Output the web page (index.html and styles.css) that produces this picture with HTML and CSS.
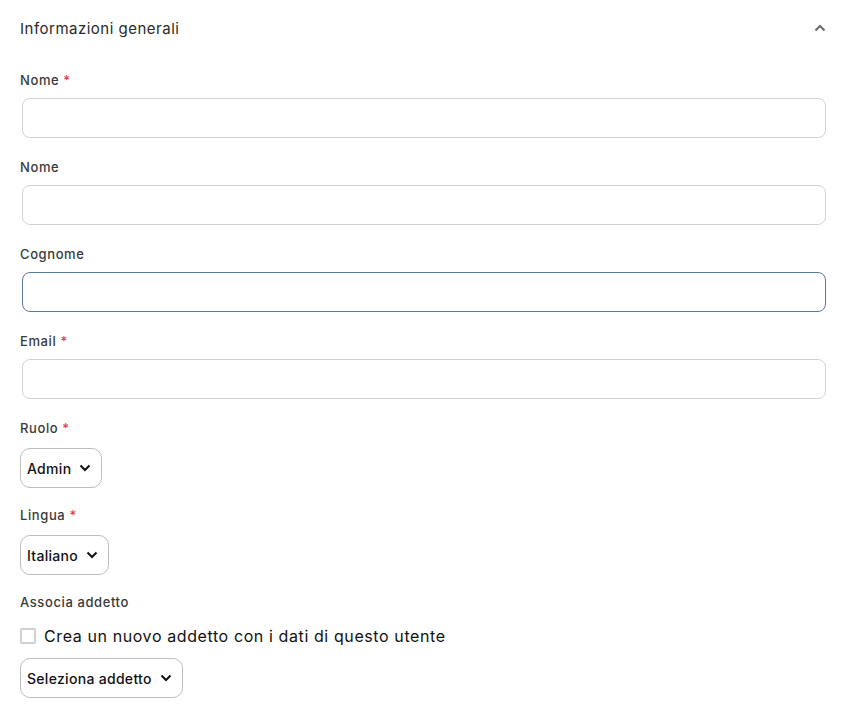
FILE: index.html
```html
<!DOCTYPE html>
<html lang="it">

<head>
    <meta charset="UTF-8">
    <meta name="viewport" content="width=device-width, initial-scale=1.0">
    <title>Informazioni generali</title>
    <link rel="stylesheet" href="styles.css">
</head>

<body>
    <div class="section">
        <div class="section-header">
            <span class="section-title">Informazioni generali</span>
            <svg class="collapse-icon" width="12" height="8" viewBox="0 0 12 8">
                <path d="M1.5 6.5 L6 2 L10.5 6.5" fill="none" stroke="#6b6b6b" stroke-width="2" />
            </svg>
        </div>

        <div class="field">
            <label class="field-label">Nome <span class="required">*</span></label>
            <input type="text" class="text-input">
        </div>

        <div class="field">
            <label class="field-label">Nome</label>
            <input type="text" class="text-input">
        </div>

        <div class="field">
            <label class="field-label">Cognome</label>
            <input type="text" class="text-input focused">
        </div>

        <div class="field">
            <label class="field-label">Email <span class="required">*</span></label>
            <input type="text" class="text-input">
        </div>

        <div class="field">
            <label class="field-label">Ruolo <span class="required">*</span></label>
            <div class="select">
                <span>Admin</span>
                <svg width="12" height="8" viewBox="0 0 12 8">
                    <path d="M1.5 1.5 L6 6 L10.5 1.5" fill="none" stroke="#111" stroke-width="2" />
                </svg>
            </div>
        </div>

        <div class="field">
            <label class="field-label">Lingua <span class="required">*</span></label>
            <div class="select">
                <span>Italiano</span>
                <svg width="12" height="8" viewBox="0 0 12 8">
                    <path d="M1.5 1.5 L6 6 L10.5 1.5" fill="none" stroke="#111" stroke-width="2" />
                </svg>
            </div>
        </div>

        <div class="field">
            <label class="field-label">Associa addetto</label>
            <label class="checkbox-row">
                <span class="checkbox"></span>
                <span>Crea un nuovo addetto con i dati di questo utente</span>
            </label>
            <div class="select last">
                <span>Seleziona addetto</span>
                <svg width="12" height="8" viewBox="0 0 12 8">
                    <path d="M1.5 1.5 L6 6 L10.5 1.5" fill="none" stroke="#111" stroke-width="2" />
                </svg>
            </div>
        </div>
    </div>
</body>

</html>
```

FILE: styles.css
```css
body {
    font-family: 'Inter', 'Noto Sans', sans-serif;
    background-color: #fff;
    margin: 0;
    color: #222;
}

.section {
    padding: 0 14px 20px 20px;
}

.section-header {
    display: flex;
    justify-content: space-between;
    align-items: center;
    height: 56px;
    margin-bottom: 14px;
}

.section-title {
    font-size: 15px;
    letter-spacing: 0.5px;
    color: #2a2a2a;
}

.collapse-icon {
    margin-right: 2px;
}

.field {
    display: flex;
    flex-direction: column;
    align-items: flex-start;
    margin-bottom: 19px;
}

.field-label {
    font-size: 13px;
    font-weight: 500;
    line-height: 20px;
    letter-spacing: 0.6px;
    color: #3a3a3a;
    margin-bottom: 8px;
}

.required {
    color: #e0394b;
}

.text-input {
    box-sizing: border-box;
    width: calc(100% - 4px);
    height: 40px;
    margin: 0 2px;
    border: 1px solid #d2d2d2;
    border-radius: 8px;
    outline: none;
    font-family: inherit;
}

.text-input.focused {
    border-color: #5b7896;
}

.select {
    box-sizing: border-box;
    height: 40px;
    display: flex;
    align-items: center;
    gap: 8px;
    margin: 2px 0 -2px;
    padding: 0 10px 0 6px;
    border: 1px solid #bdbdbd;
    border-radius: 10px;
    font-size: 14px;
    font-weight: 500;
    letter-spacing: 0.3px;
    color: #111;
}

.select.last {
    margin: 0;
}

.checkbox-row {
    display: flex;
    align-items: center;
    gap: 8px;
    font-size: 16px;
    letter-spacing: 0.6px;
    color: #111;
    margin: 6px 0 12px;
}

.checkbox {
    box-sizing: border-box;
    width: 16px;
    height: 16px;
    border: 2px solid #d0d0d0;
    border-radius: 2px;
}
```
